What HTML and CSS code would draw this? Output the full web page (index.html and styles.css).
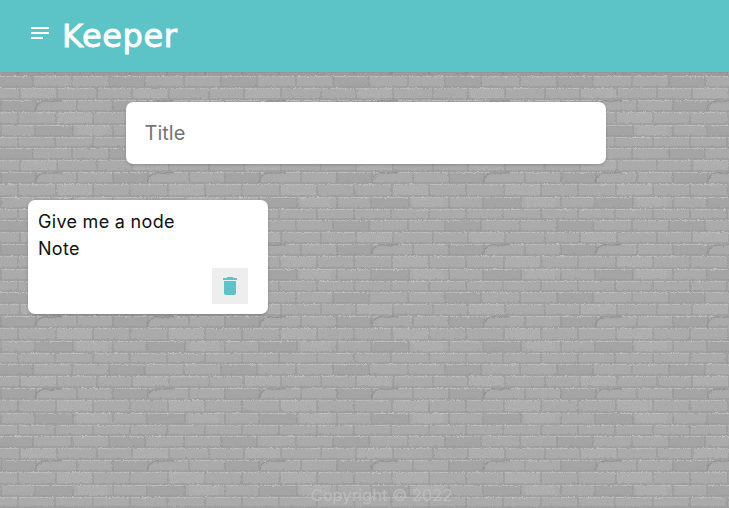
FILE: index.html
```html
<!DOCTYPE html>
<html lang="en">
<head>
<meta charset="utf-8">
<title>Keeper</title>
<link rel="stylesheet" href="styles.css">
</head>
<body class="page">
<svg class="bricks" width="729" height="508" aria-hidden="true">
  <defs>
    <filter id="grain" x="0" y="0" width="100%" height="100%">
      <feTurbulence type="fractalNoise" baseFrequency="0.95" numOctaves="2" seed="4"/>
      <feColorMatrix type="matrix" values="0 0 0 0 0.38  0 0 0 0 0.38  0 0 0 0 0.38  2.200 0 0 0 -0.9"/>
    </filter>
    <filter id="rough" x="0" y="0" width="100%" height="100%">
      <feTurbulence type="fractalNoise" baseFrequency="0.4" numOctaves="2" seed="9" result="n"/>
      <feDisplacementMap in="SourceGraphic" in2="n" scale="3"/>
    </filter>
    <pattern id="wall" width="112" height="72" patternUnits="userSpaceOnUse">
      <rect width="112" height="72" fill="#acacac"/>
      <g fill="#a4a4a4">
        <rect x="0" y="28" width="36" height="11"/>
        <rect x="36" y="53" width="37" height="11"/>
        <rect x="0" y="4" width="33" height="11"/>
        <rect x="109" y="4" width="3" height="11"/>
      </g>
      <g fill="#b1b1b1">
        <rect x="20" y="16" width="37" height="11"/>
        <rect x="77" y="53" width="30" height="11"/>
        <rect x="56" y="40" width="37" height="12"/>
      </g>
      <g fill="none" stroke="#c0c0c0" stroke-width="1">
        <path d="M0 4.500H112M0 16.500H112M0 28.500H112M0 40.500H112M0 53.500H112M0 65.500H112"/>
      </g>
      <g fill="none" stroke="#8f8f8f" stroke-width="1">
        <path d="M0 3H112M0 15H112M0 27H112M0 39H112M0 52H112M0 64H112"/>
        <path d="M97 16V27M20 16V27M57 16V27M77 28V39M1 28V39M36 28V39M93 40V52M18 40V52M56 40V52M73 53V64M1 53V64M35 53V64M93 65V72M18 65V72M55 65V72M93 0V3M18 0V3M55 0V3M72 4V15M109 4V15M33 4V15"/>
        <path d="M35 38C36 32 41 28 48 29S58 27 62 29" stroke-width="1.500"/>
      </g>
    </pattern>
  </defs>
  <rect width="729" height="508" fill="url(#wall)" filter="url(#rough)"/>
  <rect width="729" height="508" filter="url(#grain)"/>
</svg>
<header class="topbar">
  <svg class="menu-icon" width="18" height="12" viewBox="0 0 18 12" aria-hidden="true">
    <path d="M0 0h18v2H0zM0 5h18v2H0zM0 10h12v2H0z" fill="#fff"/>
  </svg>
  <h1 class="brand">Keeper</h1>
</header>
<main class="content">
  <div class="composer-row">
    <form class="composer"><span class="placeholder">Title</span></form>
  </div>
  <article class="note">
    <h2 class="note-title">Give me a node</h2>
    <p class="note-body">Note</p>
    <div class="note-actions">
      <button class="delete" type="button" aria-label="Delete">
        <svg width="24" height="24" viewBox="0 0 24 24" aria-hidden="true">
          <path d="M6 19c0 1.100.9 2 2 2h8c1.100 0 2-.9 2-2V7H6v12zM19 4h-3.500l-1-1h-5l-1 1H5v2h14V4z" fill="#5cc3c7"/>
        </svg>
      </button>
    </div>
  </article>
</main>
<footer class="footer">Copyright © 2022</footer>
</body>
</html>
```
FILE: styles.css
```css
* { box-sizing: border-box; }
html, body { margin: 0; height: 100%; }
.page {
  position: relative;
  width: 729px;
  height: 508px;
  overflow: hidden;
  display: flex;
  flex-direction: column;
  font-family: "Inter", "Liberation Sans", sans-serif;
  background: #a8a8a8;
}
.bricks { position: absolute; left: 0; top: 0; }
.topbar {
  position: relative;
  height: 72px;
  flex: none;
  display: flex;
  align-items: flex-start;
  gap: 13px;
  padding: 27px 0 0 31px;
  background: #5cc3c7;
  box-shadow: 0 0 4px rgba(0, 0, 0, 0.3);
}
.brand {
  margin: -10px 0 0;
  font-family: "DejaVu Sans", sans-serif;
  font-size: 32px;
  font-weight: 400;
  letter-spacing: 0.600px;
  -webkit-text-stroke: 0.900px #fff;
  color: #fff;
  line-height: 38px;
}
.content {
  position: relative;
  flex: 1;
  display: flex;
  flex-direction: column;
  align-items: flex-start;
  padding: 30px 0 0 28px;
}
.composer-row { width: 100%; padding-left: 98px; }
.composer {
  width: 480px;
  height: 62px;
  display: flex;
  align-items: center;
  padding: 0 18.500px;
  background: #fff;
  border-radius: 7px;
  box-shadow: 0 1px 3px rgba(0, 0, 0, 0.2);
}
.placeholder { font-size: 20px; color: #757575; }
.note {
  width: 240px;
  height: 114px;
  margin-top: 36px;
  padding: 8px 10px 10px;
  background: #fff;
  border-radius: 7px;
  box-shadow: 0 1px 3px rgba(0, 0, 0, 0.2);
  display: flex;
  flex-direction: column;
}
.note-title, .note-body {
  margin: 0;
  font-size: 18px;
  font-weight: 400;
  letter-spacing: 0.300px;
  line-height: 27px;
  color: #111;
}
.note-actions { display: flex; justify-content: flex-end; padding: 6px 10px 0 0; }
.delete {
  width: 36px;
  height: 36px;
  padding: 0;
  border: 0;
  background: #eeeeee;
  display: flex;
  align-items: center;
  justify-content: center;
}
.footer {
  position: absolute;
  left: 34px;
  right: 0;
  bottom: 3px;
  text-align: center;
  font-size: 16.500px;
  line-height: 20px;
  color: #bcbcbc;
}
```
